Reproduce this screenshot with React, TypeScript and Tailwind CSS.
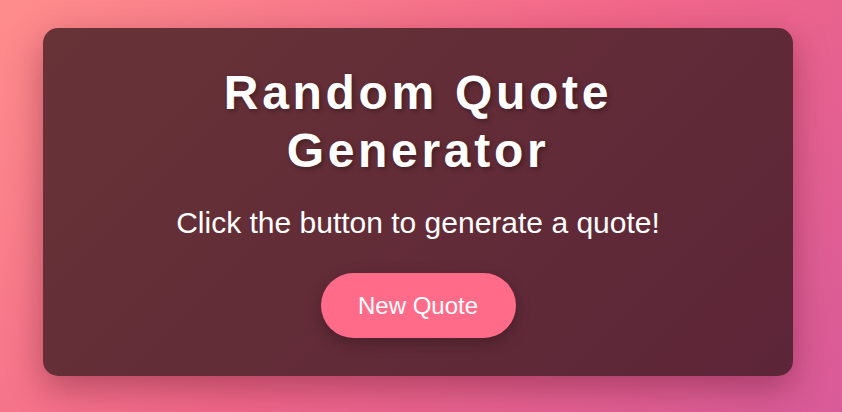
import React, { useState } from 'react';

const quotes = [
  'The best way to get started is to quit talking and begin doing.',
  'Stay hungry, stay foolish.',
  'Simplicity is the ultimate sophistication.',
];

export default function App() {
  const [quote, setQuote] = useState<string | null>(null);

  const nextQuote = () => {
    setQuote(quotes[Math.floor(Math.random() * quotes.length)]);
  };

  return (
    <div className="min-h-screen w-full flex items-center justify-center pr-[6px] pb-[8px] bg-[linear-gradient(135deg,#ff8d8c_0%,#f2678a_50%,#d85a98_100%)] font-['Liberation_Sans',Arial,sans-serif]">
      <div className="w-[750px] rounded-[15px] bg-[linear-gradient(135deg,#683337_0%,#5d2538_100%)] shadow-[0_12px_35px_rgba(60,0,20,0.35)] pt-[36px] pb-[38px] flex flex-col items-center text-white text-center">
        <h1 className="w-[640px] text-[48px] leading-[1.2] font-bold tracking-[3.7px] [text-shadow:2px_2px_5px_rgba(0,0,0,0.35)]">
          Random Quote Generator
        </h1>
        <p className="mt-[27px] text-[30px] leading-[normal]">
          {quote ?? 'Click the button to generate a quote!'}
        </p>
        <button
          onClick={nextQuote}
          className="mt-[33px] w-[195px] h-[65px] rounded-full bg-[#ff6b89] text-[24px] leading-[normal] text-white shadow-[0_5px_15px_rgba(0,0,0,0.25)] cursor-pointer"
        >
          New Quote
        </button>
      </div>
    </div>
  );
}
